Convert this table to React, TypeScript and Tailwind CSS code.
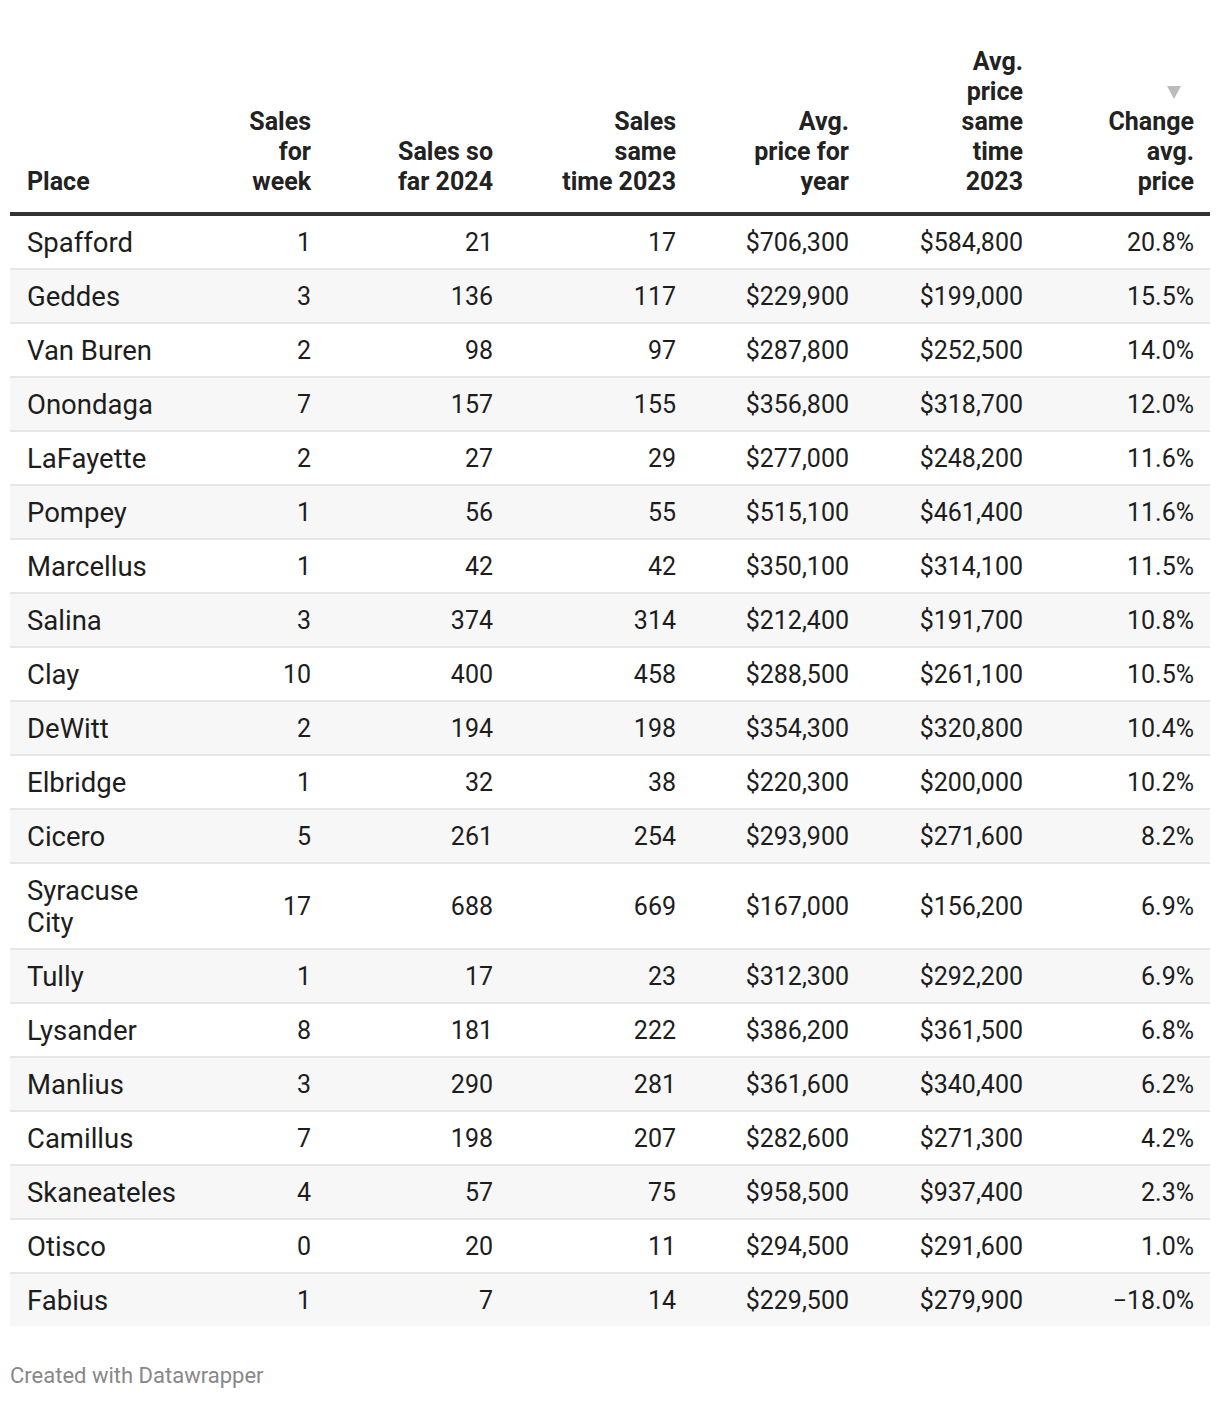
const rows: [string, number, number, number, string, string, string][] = [
  ['Spafford', 1, 21, 17, '$706,300', '$584,800', '20.8%'],
  ['Geddes', 3, 136, 117, '$229,900', '$199,000', '15.5%'],
  ['Van Buren', 2, 98, 97, '$287,800', '$252,500', '14.0%'],
  ['Onondaga', 7, 157, 155, '$356,800', '$318,700', '12.0%'],
  ['LaFayette', 2, 27, 29, '$277,000', '$248,200', '11.6%'],
  ['Pompey', 1, 56, 55, '$515,100', '$461,400', '11.6%'],
  ['Marcellus', 1, 42, 42, '$350,100', '$314,100', '11.5%'],
  ['Salina', 3, 374, 314, '$212,400', '$191,700', '10.8%'],
  ['Clay', 10, 400, 458, '$288,500', '$261,100', '10.5%'],
  ['DeWitt', 2, 194, 198, '$354,300', '$320,800', '10.4%'],
  ['Elbridge', 1, 32, 38, '$220,300', '$200,000', '10.2%'],
  ['Cicero', 5, 261, 254, '$293,900', '$271,600', '8.2%'],
  ['Syracuse City', 17, 688, 669, '$167,000', '$156,200', '6.9%'],
  ['Tully', 1, 17, 23, '$312,300', '$292,200', '6.9%'],
  ['Lysander', 8, 181, 222, '$386,200', '$361,500', '6.8%'],
  ['Manlius', 3, 290, 281, '$361,600', '$340,400', '6.2%'],
  ['Camillus', 7, 198, 207, '$282,600', '$271,300', '4.2%'],
  ['Skaneateles', 4, 57, 75, '$958,500', '$937,400', '2.3%'],
  ['Otisco', 0, 20, 11, '$294,500', '$291,600', '1.0%'],
  ['Fabius', 1, 7, 14, '$229,500', '$279,900', '\u221218.0%'],
];

const th = 'align-bottom text-right font-bold pr-4 pl-2 pb-[15px]';
const td = 'text-right pr-4 pl-2 pt-[12px] pb-[10px]';

export default function App() {
  return (
    <div
      className="min-h-[1402px] bg-white px-[10px] pt-[47px] text-[#1d1d1d]"
      style={{ fontFamily: 'Roboto, "Liberation Sans", sans-serif' }}
    >
      <table className="w-[1200px] table-fixed border-collapse text-[25px] leading-[30px]">
        <colgroup>
          <col className="w-[185px]" />
          <col className="w-[132px]" />
          <col className="w-[182px]" />
          <col className="w-[183px]" />
          <col className="w-[173px]" />
          <col className="w-[174px]" />
          <col className="w-[171px]" />
        </colgroup>
        <thead>
          <tr className="border-b-4 border-[#333333] text-[#222222]">
            <th className="align-bottom text-left font-bold pl-[17px] pr-2 pb-[15px]">Place</th>
            <th className={th}>Sales<br />for<br />week</th>
            <th className={th}>Sales so<br />far 2024</th>
            <th className={th}>Sales<br />same<br />time 2023</th>
            <th className={th}>Avg.<br />price for<br />year</th>
            <th className={th}>Avg.<br />price<br />same<br />time<br />2023</th>
            <th className={th}>
              <div className="flex h-[30px] items-center justify-end pr-[13px]">
                <svg width="14" height="14" viewBox="0 0 14 14">
                  <polygon points="0,1 14,1 7,14" fill="#bbbbbb" />
                </svg>
              </div>
              Change<br />avg.<br />price
            </th>
          </tr>
        </thead>
        <tbody>
          {rows.map((r, i) => (
            <tr
              key={r[0]}
              className={`${i % 2 === 1 ? 'bg-[#f7f7f7]' : 'bg-white'} ${
                i < rows.length - 1 ? 'border-b-2 border-[#e6e6e6]' : ''
              }`}
            >
              <td className="text-left pl-[17px] pr-4 pt-[11px] pb-[9px] text-[27.5px] leading-[32px]">{r[0]}</td>
              <td className={td}>{r[1]}</td>
              <td className={td}>{r[2]}</td>
              <td className={td}>{r[3]}</td>
              <td className={td}>{r[4]}</td>
              <td className={td}>{r[5]}</td>
              <td className={td}>{r[6]}</td>
            </tr>
          ))}
        </tbody>
      </table>
      <div className="mt-[38px] text-[22px] leading-[24px] text-[#888888]">Created with Datawrapper</div>
    </div>
  );
}
